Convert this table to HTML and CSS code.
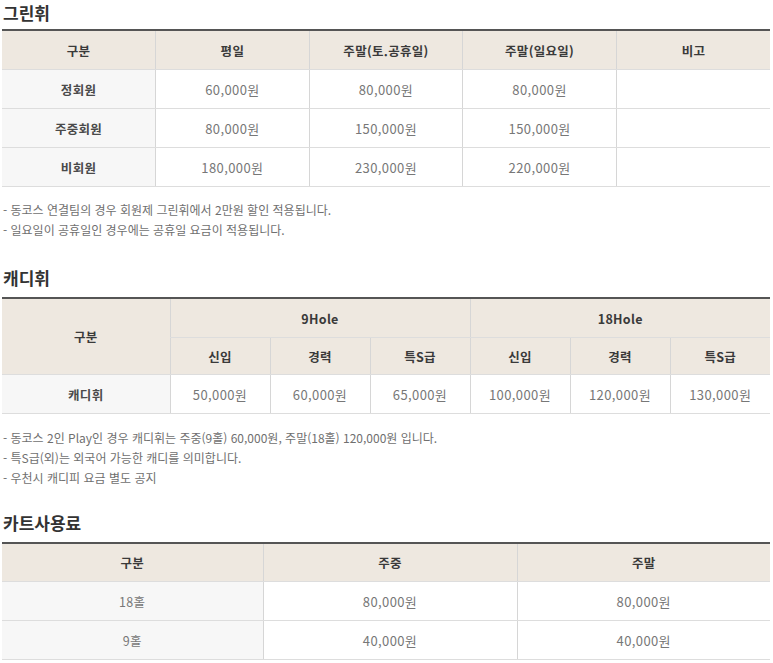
FILE: index.html
```html
<!DOCTYPE html>
<html lang="ko">
<head>
<meta charset="utf-8">
<link rel="stylesheet" href="styles.css">
</head>
<body>
<div class="page">
  <h2 class="title">그린휘</h2>
  <table class="tbl t1">
    <colgroup><col><col><col><col><col></colgroup>
    <thead>
      <tr><th>구분</th><th>평일</th><th>주말(토.공휴일)</th><th>주말(일요일)</th><th>비고</th></tr>
    </thead>
    <tbody>
      <tr><th class="rowh">정회원</th><td>60,000원</td><td>80,000원</td><td>80,000원</td><td></td></tr>
      <tr><th class="rowh">주중회원</th><td>80,000원</td><td>150,000원</td><td>150,000원</td><td></td></tr>
      <tr><th class="rowh">비회원</th><td>180,000원</td><td>230,000원</td><td>220,000원</td><td></td></tr>
    </tbody>
  </table>
  <ul class="notes n1">
    <li>- 동코스 연결팀의 경우 회원제 그린휘에서 2만원 할인 적용됩니다.</li>
    <li>- 일요일이 공휴일인 경우에는 공휴일 요금이 적용됩니다.</li>
  </ul>

  <h2 class="title t2title">캐디휘</h2>
  <table class="tbl t2">
    <colgroup><col class="c-first"><col><col><col><col><col><col></colgroup>
    <thead>
      <tr class="h1"><th rowspan="2">구분</th><th colspan="3">9Hole</th><th colspan="3">18Hole</th></tr>
      <tr class="h2"><th>신입</th><th>경력</th><th>특S급</th><th>신입</th><th>경력</th><th>특S급</th></tr>
    </thead>
    <tbody>
      <tr><th class="rowh">캐디휘</th><td>50,000원</td><td>60,000원</td><td>65,000원</td><td>100,000원</td><td>120,000원</td><td>130,000원</td></tr>
    </tbody>
  </table>
  <ul class="notes n2">
    <li>- 동코스 2인 Play인 경우 캐디휘는 주중(9홀) 60,000원, 주말(18홀) 120,000원 입니다.</li>
    <li>- 특S급(외)는 외국어 가능한 캐디를 의미합니다.</li>
    <li>- 우천시 캐디피 요금 별도 공지</li>
  </ul>

  <h2 class="title t3title">카트사용료</h2>
  <table class="tbl t3">
    <colgroup><col class="c-a"><col class="c-b"><col></colgroup>
    <thead>
      <tr><th>구분</th><th>주중</th><th>주말</th></tr>
    </thead>
    <tbody>
      <tr><td class="rowh plain">18홀</td><td>80,000원</td><td>80,000원</td></tr>
      <tr><td class="rowh plain">9홀</td><td>40,000원</td><td>40,000원</td></tr>
    </tbody>
  </table>
</div>
</body>
</html>
```

FILE: styles.css
```css
html, body {
  margin: 0;
  padding: 0;
  background: #ffffff;
}
body {
  font-family: "Noto Sans CJK KR", "Noto Sans", sans-serif;
  color: #666;
}
.page {
  width: 768px;
  padding-left: 2px;
}
.title {
  margin: 0;
  font-size: 17px;
  line-height: 26px;
  font-weight: 700;
  color: #333;
  padding-left: 1px;
  margin-bottom: 3px;
}
.t2title { margin-top: 25px; margin-bottom: 6px; }
.t3title { margin-top: 22px; margin-bottom: 6px; }

.tbl {
  width: 768px;
  border-collapse: collapse;
  table-layout: fixed;
  border-top: 2px solid #555;
  font-size: 12.5px;
  letter-spacing: 0.3px;
}
.tbl th, .tbl td {
  text-align: center;
  vertical-align: middle;
  padding: 0;
  border-bottom: 1px solid #ddd;
  border-left: 1px solid #d6d6d6;
}
.tbl tr > :first-child { border-left: none; }
.tbl .h2 > :first-child { border-left: 1px solid #d6d6d6; }
.tbl thead th {
  background: #eee8e0;
  color: #3a3a3a;
  font-weight: 700;
  height: 38px;
  border-bottom: 1px solid #ddd;
}
.tbl thead th[rowspan] { border-left: none; }
.tbl tbody td, .tbl tbody th {
  height: 38px;
  color: #777;
  font-weight: 400;
  font-size: 13px;
  letter-spacing: 0.4px;
}
.tbl tbody .rowh {
  background: #f7f7f7;
  color: #4a4a4a;
  font-weight: 700;
  font-size: 12.5px;
  letter-spacing: 0.3px;
}
.tbl tbody .rowh.plain {
  font-weight: 400;
  color: #777;
}
.t2 .c-first { width: 168px; }
.t2 .h2 th { height: 36px; }
.t3 .c-a { width: 261px; }
.t3 .c-b { width: 254px; }
.t3 thead th { height: 37px; }

.notes {
  list-style: none;
  margin: 0;
  padding: 0 0 0 1px;
  font-size: 12px;
  line-height: 20px;
  color: #6f6f6f;
}
.n1 { margin-top: 13px; }
.n2 { margin-top: 14px; }
```
